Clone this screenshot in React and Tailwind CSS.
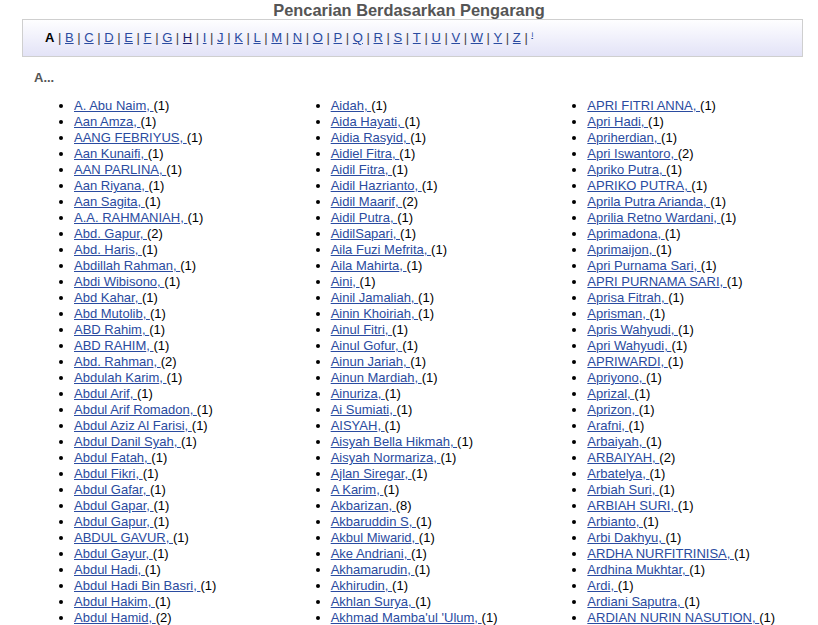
import React from 'react'

const letters = ['B', 'C', 'D', 'E', 'F', 'G', 'H', 'I', 'J', 'K', 'L', 'M', 'N', 'O', 'P', 'Q', 'R', 'S', 'T', 'U', 'V', 'W', 'Y', 'Z']

const columns = [
  [
    ['A. Abu Naim', 1], ['Aan Amza', 1], ['AANG FEBRIYUS', 1], ['Aan Kunaifi', 1], ['AAN PARLINA', 1],
    ['Aan Riyana', 1], ['Aan Sagita', 1], ['A.A. RAHMANIAH', 1], ['Abd. Gapur', 2], ['Abd. Haris', 1],
    ['Abdillah Rahman', 1], ['Abdi Wibisono', 1], ['Abd Kahar', 1], ['Abd Mutolib', 1], ['ABD Rahim', 1],
    ['ABD RAHIM', 1], ['Abd. Rahman', 2], ['Abdulah Karim', 1], ['Abdul Arif', 1], ['Abdul Arif Romadon', 1],
    ['Abdul Aziz Al Farisi', 1], ['Abdul Danil Syah', 1], ['Abdul Fatah', 1], ['Abdul Fikri', 1], ['Abdul Gafar', 1],
    ['Abdul Gapar', 1], ['Abdul Gapur', 1], ['ABDUL GAVUR', 1], ['Abdul Gayur', 1], ['Abdul Hadi', 1],
    ['Abdul Hadi Bin Basri', 1], ['Abdul Hakim', 1], ['Abdul Hamid', 2],
  ],
  [
    ['Aidah', 1], ['Aida Hayati', 1], ['Aidia Rasyid', 1], ['Aidiel Fitra', 1], ['Aidil Fitra', 1],
    ['Aidil Hazrianto', 1], ['Aidil Maarif', 2], ['Aidil Putra', 1], ['AidilSapari', 1], ['Aila Fuzi Mefrita', 1],
    ['Aila Mahirta', 1], ['Aini', 1], ['Ainil Jamaliah', 1], ['Ainin Khoiriah', 1], ['Ainul Fitri', 1],
    ['Ainul Gofur', 1], ['Ainun Jariah', 1], ['Ainun Mardiah', 1], ['Ainuriza', 1], ['Ai Sumiati', 1],
    ['AISYAH', 1], ['Aisyah Bella Hikmah', 1], ['Aisyah Normariza', 1], ['Ajlan Siregar', 1], ['A Karim', 1],
    ['Akbarizan', 8], ['Akbaruddin S', 1], ['Akbul Miwarid', 1], ['Ake Andriani', 1], ['Akhamarudin', 1],
    ['Akhirudin', 1], ['Akhlan Surya', 1], ["Akhmad Mamba'ul 'Ulum", 1],
  ],
  [
    ['APRI FITRI ANNA', 1], ['Apri Hadi', 1], ['Apriherdian', 1], ['Apri Iswantoro', 2], ['Apriko Putra', 1],
    ['APRIKO PUTRA', 1], ['Aprila Putra Arianda', 1], ['Aprilia Retno Wardani', 1], ['Aprimadona', 1], ['Aprimaijon', 1],
    ['Apri Purnama Sari', 1], ['APRI PURNAMA SARI', 1], ['Aprisa Fitrah', 1], ['Aprisman', 1], ['Apris Wahyudi', 1],
    ['Apri Wahyudi', 1], ['APRIWARDI', 1], ['Apriyono', 1], ['Aprizal', 1], ['Aprizon', 1],
    ['Arafni', 1], ['Arbaiyah', 1], ['ARBAIYAH', 2], ['Arbatelya', 1], ['Arbiah Suri', 1],
    ['ARBIAH SURI', 1], ['Arbianto', 1], ['Arbi Dakhyu', 1], ['ARDHA NURFITRINISA', 1], ['Ardhina Mukhtar', 1],
    ['Ardi', 1], ['Ardiani Saputra', 1], ['ARDIAN NURIN NASUTION', 1],
  ],
]

export default function App() {
  return (
    <div className="w-[818px] h-[625px] overflow-hidden bg-white font-['Liberation_Sans',Arial,sans-serif] text-[13px] text-black">
      <h1 className="text-center text-[16.4px] font-bold text-[#555] leading-[18px] pt-[1px]">
        Pencarian Berdasarkan Pengarang
      </h1>

      <div className="mx-[22px] w-[781px] h-[38px] border border-[#cfcfcf] bg-gradient-to-b from-[#fefeff] to-[#e3e3f7] flex items-center pl-[22px] overflow-hidden whitespace-nowrap">
        <span className="font-bold">A</span>
        {letters.map((l) => (
          <span key={l}>
            <span className="text-[#444]">&nbsp;|&nbsp;</span>
            <a href="#" className={l === 'H' ? 'underline text-[#1b1b6b]' : 'underline text-[#2a4ba0]'}>{l}</a>
          </span>
        ))}
        <span className="text-[#444]">&nbsp;|&nbsp;</span>
        <a href="#" className="underline text-[#2a4ba0] text-[8px] self-start mt-[9px]">i</a>
      </div>

      <div className="pl-[34px] pt-[13px] font-bold text-[#555] leading-[16px]">A...</div>

      <div className="grid grid-cols-3 ml-[34px] w-[770px] mt-[12px]">
        {columns.map((col, i) => (
          <ul key={i} className="list-disc pl-[40px] leading-[16px]">
            {col.map(([name, n]) => (
              <li key={name} className="whitespace-nowrap">
                <a href="#" className="underline text-[#2a4ba0]">{name}, </a>({n})
              </li>
            ))}
          </ul>
        ))}
      </div>
    </div>
  )
}
